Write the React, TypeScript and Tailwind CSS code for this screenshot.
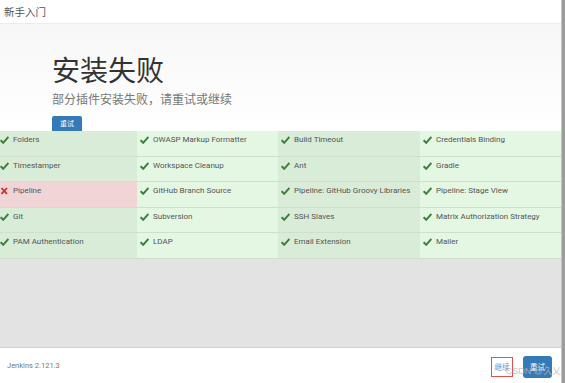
import React from "react";

type Item = { name: string; ok: boolean };

const rows: Item[][] = [
  [
    { name: "Folders", ok: true },
    { name: "OWASP Markup Formatter", ok: true },
    { name: "Build Timeout", ok: true },
    { name: "Credentials Binding", ok: true },
  ],
  [
    { name: "Timestamper", ok: true },
    { name: "Workspace Cleanup", ok: true },
    { name: "Ant", ok: true },
    { name: "Gradle", ok: true },
  ],
  [
    { name: "Pipeline", ok: false },
    { name: "GitHub Branch Source", ok: true },
    { name: "Pipeline: GitHub Groovy Libraries", ok: true },
    { name: "Pipeline: Stage View", ok: true },
  ],
  [
    { name: "Git", ok: true },
    { name: "Subversion", ok: true },
    { name: "SSH Slaves", ok: true },
    { name: "Matrix Authorization Strategy", ok: true },
  ],
  [
    { name: "PAM Authentication", ok: true },
    { name: "LDAP", ok: true },
    { name: "Email Extension", ok: true },
    { name: "Mailer", ok: true },
  ],
];

function Check() {
  return (
    <svg width="9" height="8" viewBox="0 0 9 8" className="shrink-0">
      <path d="M0.6 4.2 L3.2 6.8 L8.4 1.0" fill="none" stroke="#3d7f3d" strokeWidth="2" strokeLinejoin="miter" />
    </svg>
  );
}

function Cross() {
  return (
    <svg width="9" height="8" viewBox="0 0 9 8" className="shrink-0">
      <path d="M1.5 1 L7 6.8 M7 1 L1.5 6.8" fill="none" stroke="#c9302c" strokeWidth="1.8" />
    </svg>
  );
}

export default function App() {
  const cjk = "'Noto Sans CJK SC', 'Noto Sans', sans-serif";
  return (
    <div className="w-[565px] h-[383px] flex bg-white overflow-hidden" style={{ fontFamily: cjk }}>
      <div className="w-[561px] flex flex-col">
        <div className="h-[24px] border-b border-[#ececec] flex items-center pl-[4px] text-[10.5px] text-[#555]">
          新手入门
        </div>
        <div className="bg-gradient-to-b from-[#f7f7f7] to-white pt-[30px] pl-[52px] flex flex-col items-start">
          <div className="text-[28px] leading-[30px] text-[#333]">安装失败</div>
          <div className="mt-[8px] text-[12px] leading-[14px] text-[#777]">部分插件安装失败，请重试或继续</div>
          <div className="mt-[10px] w-[30px] h-[15px] bg-[#337ab7] rounded-t-[2px] flex items-center justify-center text-[7px] text-white">
            重试
          </div>
        </div>
        <div
          className="grid grid-cols-[137px_141px_142px_141px]"
          style={{ fontFamily: "Roboto, 'Liberation Sans', sans-serif" }}
        >
          {rows.map((row, ri) =>
            row.map((it, ci) => {
              const dark = ci % 2 === 0;
              const bg = !it.ok
                ? "bg-[#f1d5d6]"
                : dark
                ? "bg-[#d8ecd8]"
                : "bg-[#e3f7e3]";
              const pad = ci === 0 ? "pl-[0px]" : "pl-[3px]";
              return (
                <div
                  key={`${ri}-${ci}`}
                  className={`${bg} ${pad} h-[25.6px] border-b border-[#cde0cd] flex items-start pt-[4px] gap-[4px] text-[8px] leading-[10px] text-[#555]`}
                >
                  <div className="h-[10px] flex items-center">{it.ok ? <Check /> : <Cross />}</div>
                  <span className="whitespace-nowrap">{it.name}</span>
                </div>
              );
            })
          )}
        </div>
        <div className="flex-1 bg-[#e3e3e3]" />
        <div className="h-[36px] border-t border-[#cfcfcf] flex items-center justify-between pl-[7px] pr-[9px] relative">
          <span
            className="text-[7.5px] text-[#777]"
            style={{ fontFamily: "Roboto, 'Liberation Sans', sans-serif" }}
          >
            Jenkins 2.121.3
          </span>
          <div className="flex items-center gap-[10px] pt-[2px]">
            <div className="w-[22px] h-[20px] border border-[#e05050] flex items-center justify-center text-[7.5px] text-[#5b8fd0]">
              继续
            </div>
            <div className="w-[29px] h-[22px] bg-[#337ab7] rounded-[3px] flex items-center justify-center text-[7.5px] text-white">
              重试
            </div>
          </div>
          <span
            className="absolute right-[0px] top-[17px] text-[9px] text-[#b8b8b8] opacity-80 whitespace-nowrap"
            style={{ fontFamily: "'Liberation Sans', 'Noto Sans CJK SC', sans-serif" }}
          >
            CSDN @久乂
          </span>
        </div>
      </div>
      <div className="w-[4px] bg-[#9c9c9c] border-l border-[#c4c4c4]" />
    </div>
  );
}
